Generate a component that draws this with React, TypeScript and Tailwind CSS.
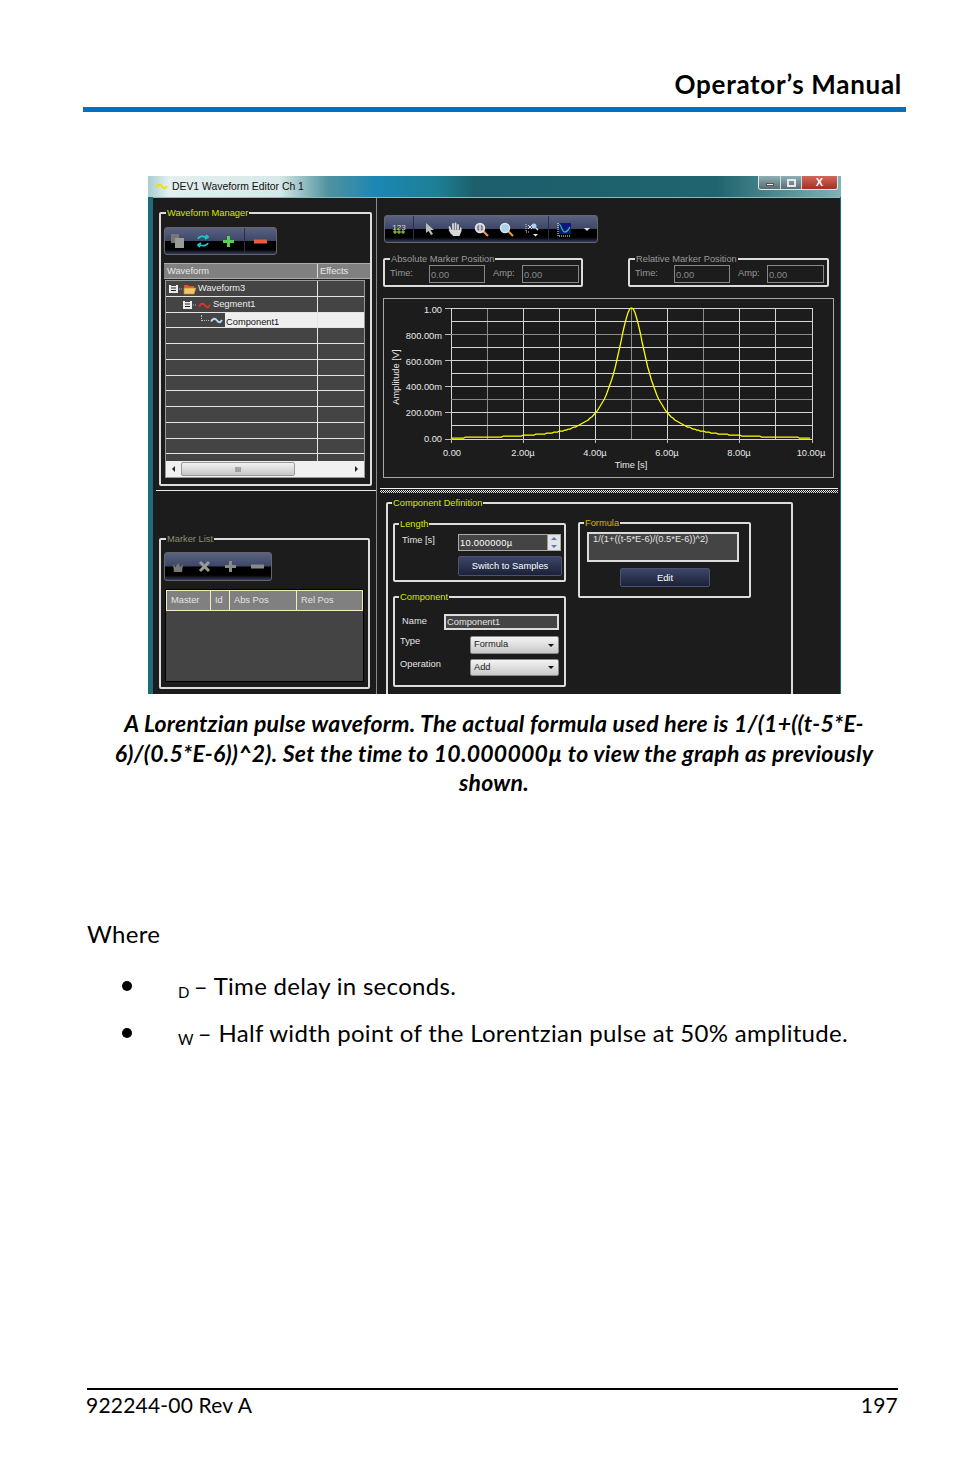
import React from 'react';

const Group = ({ title, color, className, legend = 'ml-[4px]', children }: { title: string; color: string; className: string; legend?: string; children: React.ReactNode }) => (
  <fieldset className={`border-2 border-[#dcdcdc] rounded-[2px] ${className}`}>
    <legend className={`px-[1px] text-[9.3px] leading-[12px] ${legend} ${color}`}>{title}</legend>
    {children}
  </fieldset>
);

const Slot = ({ w, children }: { w: string; children?: React.ReactNode }) => (
  <div className={`flex items-center justify-center h-full ${w}`}>{children}</div>
);

const BarDivider = () => <div className="w-px h-full bg-[#2a3048]" />;

const toolbarBg = 'bg-[linear-gradient(180deg,#5a6280_0%,#3d4768_48%,#000_52%,#000_82%,#333b5a_100%)] border border-[#666] rounded-[3px] flex items-center';

const Expander = () => (
  <svg width="13" height="9" viewBox="0 0 13 9" className="shrink-0">
    <path d="M0 0h2v1h5V0h2v8H0z" fill="#ececec" />
    <path d="M2 3h5M2 5.5h5" stroke="#222" strokeWidth="1.2" />
    <path d="M10 4h3" stroke="#bbb" strokeDasharray="1 1" />
  </svg>
);

const Wave = ({ color, w = 13 }: { color: string; w?: number }) => (
  <svg width={w} height="7" viewBox="0 0 13 7" className="shrink-0">
    <path d="M1 4.5C3 1 5 1 7 3.5S10 6 12 3" fill="none" stroke={color} strokeWidth="2" />
  </svg>
);

const Folder = () => (
  <svg width="14" height="12" viewBox="0 0 14 12" className="shrink-0">
    <path d="M1 2h4l1 1h5v2H1z" fill="#e0552a" />
    <path d="M1 11V5h12l-2 6z" fill="#f2c56b" stroke="#c98a2c" strokeWidth="0.7" />
  </svg>
);

const Lens = ({ red }: { red?: boolean }) => (
  <svg width="15" height="15" viewBox="0 0 15 15">
    <path d="M9 9l5 5" stroke="#e79a3a" strokeWidth="2.2" />
    <circle cx="6" cy="6" r="4.5" fill="#a9d3ee" stroke="#dfe8ee" strokeWidth="1.4" />
    {red && <path d="M5 4H4v4h1M7 4h1v4H7" fill="none" stroke="#d8261c" />}
  </svg>
);

const HandIcon = () => (
  <svg width="14" height="15" viewBox="0 0 14 15">
    <path d="M2.5 8L1.5 5M5 7V2M7.5 7V1.5M10 7V3" stroke="#d8d8d8" strokeWidth="1.8" strokeLinecap="round" />
    <path d="M3 7.5h9V5l1.5 1v3l-2 5H5L3 11z" fill="#d8d8d8" />
    <path d="M1.5 7.5L4 12" stroke="#d8d8d8" strokeWidth="2" />
  </svg>
);

const Plus = ({ color }: { color: string }) => (
  <svg width="13" height="13" viewBox="0 0 13 13"><path d="M6.5 1v11M1 6.5h11" stroke={color} strokeWidth="3" /></svg>
);

const Minus = ({ color }: { color: string }) => (
  <svg width="13" height="5" viewBox="0 0 13 5"><rect width="13" height="4" y="0.5" fill={color} /></svg>
);

const Chart = () => {
  const x0 = 67, x1 = 428, y0 = 9, y1 = 140;
  const sx = (t: number) => x0 + ((x1 - x0) * t) / 10;
  const sy = (v: number) => y1 - (y1 - y0) * v;
  const pts: string[] = [];
  for (let t = 0; t <= 10; t += 0.05) {
    const v = 1 / (1 + ((t - 5) / 0.5) ** 2);
    pts.push(`${sx(t).toFixed(1)},${Math.round(sy(v))}`);
  }
  const vGrey = [1, 5, 7];
  const hGrey = [2, 7];
  const yLabels = [['1.00', 10], ['800.00m', 36], ['600.00m', 62], ['400.00m', 87], ['200.00m', 113], ['0.00', 139]] as const;
  const xLabels = [['0.00', 68], ['2.00µ', 139], ['4.00µ', 211], ['6.00µ', 283], ['8.00µ', 355], ['10.00µ', 427]] as const;
  return (
    <svg width="449" height="178" viewBox="0 0 449 178" className="block">
      <g shapeRendering="crispEdges">
        {Array.from({ length: 11 }, (_, i) => (
          <line key={i} x1={sx(i)} x2={sx(i)} y1={y0} y2={y1} stroke={vGrey.includes(i) ? '#8a8a8a' : '#d4d4d4'} />
        ))}
        {Array.from({ length: 11 }, (_, i) => (
          <line key={i} y1={y0 + ((y1 - y0) * i) / 10} y2={y0 + ((y1 - y0) * i) / 10} x1={x0} x2={x1} stroke={hGrey.includes(i) ? '#8a8a8a' : '#d4d4d4'} />
        ))}
        {[0, 2, 4, 6, 8, 10].map(i => (
          <React.Fragment key={i}>
            <line x1={x0 - 6} x2={x0} y1={y0 + ((y1 - y0) * i) / 10} y2={y0 + ((y1 - y0) * i) / 10} stroke="#bbb" />
            <line x1={sx(i)} x2={sx(i)} y1={y1} y2={y1 + 4} stroke="#bbb" />
          </React.Fragment>
        ))}
      </g>
      <polyline points={pts.join(' ')} fill="none" stroke="#ffff00" strokeWidth="1.25" />
      <g fill="#e8e8e8" fontSize="9.3" fontFamily="'Liberation Sans', sans-serif">
        {yLabels.map(([l, y]) => <text key={l} x="58" y={y + 3.5} textAnchor="end">{l}</text>)}
        {xLabels.map(([l, x]) => <text key={l} x={x} y="157" textAnchor="middle">{l}</text>)}
        <text x="247" y="169" textAnchor="middle">Time [s]</text>
        <text transform="translate(15 78) rotate(-90)" textAnchor="middle">Amplitude [V]</text>
      </g>
    </svg>
  );
};

const treeRows = [0, 1, 2, 3, 4, 5, 6, 7, 8, 9, 10];

const WaveformManager = () => (
  <Group title="Waveform Manager" color="text-[#d6e600]" legend="ml-[2px]" className="w-[211px] pl-[3px] pb-[6px]">
    <div className={`${toolbarBg} mt-[8px] w-[113px] h-[28px]`}>
      <Slot w="w-[26px]">
        <svg width="14" height="14" viewBox="0 0 14 14"><rect x="0" y="0" width="8" height="9" fill="#777" /><rect x="4" y="4" width="9" height="10" fill="#9a9a9a" /></svg>
      </Slot>
      <Slot w="w-[26px]">
        <svg width="12" height="14" viewBox="0 0 12 14"><path d="M1 5c1-3 5-3 8-2M9 1l2 2-3 2M11 9c-1 3-5 3-8 2M3 13l-2-2 3-2" fill="none" stroke="#18c8c8" strokeWidth="1.8" /></svg>
      </Slot>
      <Slot w="w-[26px]"><Plus color="#56d050" /></Slot>
      <div className="w-[2px]" />
      <BarDivider />
      <Slot w="w-[32px]"><Minus color="#f0593a" /></Slot>
    </div>
    <div className="mt-[8px] w-[206px] h-[16px] bg-[#808080] border-y border-[#aaa] flex text-[9.3px] leading-[14px] text-[#e8e8e8]">
      <div className="w-[154px] pl-[3px] border-r border-[#ddd]">Waveform</div>
      <div className="pl-[2px]">Effects</div>
    </div>
    <div className="mt-[1px] ml-[1px] w-[200px] h-[198px] bg-[#444] border border-[#999] flex flex-col text-[9.3px] text-[#eee]">
      {treeRows.map(i => (
        <div key={i} className="h-[15.75px] shrink-0 flex border-b border-[#e4e4e4]">
          <div className="w-[152px] flex items-center border-r border-[#e4e4e4]">
            {i === 0 && (
              <div className="flex items-center gap-[1px] pl-[3px] pt-[2px]"><Expander /><Folder /><span>Waveform3</span></div>
            )}
            {i === 1 && (
              <div className="flex items-center gap-[2px] pl-[17px] pt-[2px]"><Expander /><Wave color="#e03030" /><span>Segment1</span></div>
            )}
            {i === 2 && (
              <>
                <div className="flex items-center gap-[1px] pl-[35px] w-[59px] pt-[2px]">
                  <div className="w-[8px] h-[6px] border-l border-b border-dotted border-[#bbb] -mt-[6px]" />
                  <Wave color="#bcd8f0" />
                </div>
                <div className="flex-1 self-stretch overflow-hidden bg-[#eeeeee] text-[#111] leading-[18px] pl-[1px]">Component1</div>
              </>
            )}
          </div>
          <div className={`flex-1 ${i === 2 ? 'bg-[#eeeeee]' : ''}`} />
        </div>
      ))}
      <div className="flex-1 flex min-h-0">
        <div className="w-[152px] border-r border-[#e4e4e4]" />
      </div>
      <div className="h-[16px] shrink-0 bg-[#f0f0f0] flex items-center">
        <div className="w-[15px] flex justify-center"><div className="border-y-[3px] border-r-[3px] border-y-transparent border-r-[#222]" /></div>
        <div className="w-[114px] h-[14px] bg-[linear-gradient(180deg,#f2f2f2,#c6c6c6)] border border-[#999] rounded-[2px] flex items-center justify-center text-[7px] leading-none text-[#333]">III</div>
        <div className="flex-1 flex justify-end pr-[6px]"><div className="border-y-[3px] border-l-[3px] border-y-transparent border-l-[#222]" /></div>
      </div>
    </div>
  </Group>
);

const MarkerList = () => (
  <Group title="Marker List" color="text-[#8f8f70]" legend="ml-[2px]" className="w-[211px] pl-[3px] pb-[5px]">
    <div className={`${toolbarBg} mt-[7px] w-[108px] h-[29px]`}>
      <Slot w="w-[26px]">
        <svg width="12" height="10" viewBox="0 0 12 10"><path d="M1 2l2.5 3L6 1l2.5 4L11 2l-1 8H2z" fill="#777" /></svg>
      </Slot>
      <Slot w="w-[26px]">
        <svg width="13" height="13" viewBox="0 0 13 13"><path d="M2 2l9 9M11 2l-9 9" stroke="#999" strokeWidth="3" /></svg>
      </Slot>
      <Slot w="w-[26px]"><Plus color="#8a8a8a" /></Slot>
      <Slot w="w-[28px]"><Minus color="#8a8a8a" /></Slot>
    </div>
    <div className="mt-[8px] ml-[1px] w-[199px] h-[93px] bg-[#444] border border-black flex flex-col">
      <div className="h-[21px] bg-[#808080] border border-[#f4edb8] flex text-[9.3px] leading-[19px] text-[#e4e4e4]">
        <div className="w-[44px] pl-[4px] border-r border-[#f4edb8]">Master</div>
        <div className="w-[19px] pl-[4px] border-r border-[#f4edb8]">Id</div>
        <div className="w-[67px] pl-[4px] border-r border-[#f4edb8]">Abs Pos</div>
        <div className="pl-[4px]">Rel Pos</div>
      </div>
    </div>
  </Group>
);

const MarkerPosition = ({ title, className }: { title: string; className: string }) => (
  <Group title={title} color="text-[#9a9a9a]" legend="ml-[5px]" className={className}>
    <div className="flex items-start pb-[2px] text-[9.3px] text-[#999]">
      <div className="w-[44px] pl-[5px] leading-[14px] pt-[1px]">Time:</div>
      <div className="w-[56px] h-[18px] border border-[#888] pl-[1px] leading-[18px] text-[#8a8a8a]">0.00</div>
      <div className="w-[37px] pl-[8px] leading-[14px] pt-[1px]">Amp:</div>
      <div className="w-[57px] h-[18px] border border-[#888] pl-[1px] leading-[18px] text-[#8a8a8a]">0.00</div>
    </div>
  </Group>
);

const EditorWindow = () => (
  <div className="ml-[148px] mt-[64px] w-[693px] h-[518px] overflow-hidden flex flex-col bg-[#1b6b78] font-['Liberation_Sans',sans-serif]">
    <div className="h-[21px] shrink-0 flex items-start bg-[linear-gradient(90deg,#a9cdd0_0%,#e4efef_3%,#d8e8e8_19%,#4f929e_26%,#1c87b4_33%,#1c7f94_42%,#1d5f6c_47%,#1f646e_82%,#7fb3b6_100%)]">
      <div className="flex items-center gap-[4px] pl-[7px] pt-[5px] flex-1 text-[10.4px] leading-[11px] text-[#111]">
        <Wave color="#f2e000" />
        <span>DEV1 Waveform Editor Ch 1</span>
      </div>
      <div className="flex h-[14px] mr-[3px] border border-t-0 border-[#dfe8e8] rounded-b-[3px] overflow-hidden">
        <div className="w-[22px] flex items-center justify-center bg-[linear-gradient(180deg,#8fb0b5,#566d75)] border-r border-[#cfdcdc]"><div className="w-[8px] h-[3px] mt-[4px] bg-[#f0f0f0] border border-[#555]" /></div>
        <div className="w-[21px] flex items-center justify-center bg-[linear-gradient(180deg,#8fb0b5,#566d75)] border-r border-[#cfdcdc]"><div className="w-[9px] h-[8px] border-2 border-[#e4e8e8]" /></div>
        <div className="w-[35px] flex items-center justify-center bg-[linear-gradient(180deg,#d0685c,#a52f22)] text-[11px] leading-none font-bold text-white">X</div>
      </div>
    </div>
    <div className="ml-[5px] mr-[1px] flex-1 min-h-0 flex bg-[#1c1c1c] border-t border-[#8fb8bc]">
      <div className="w-[224px] shrink-0 border-r border-[#8a8a8a]">
        <div className="h-[293px] pl-[3px] pt-[9px] border-b border-[#e8e8e8] ml-[3px]">
          <WaveformManager />
        </div>
        <div className="pl-[6px] pt-[42px]"><MarkerList /></div>
      </div>
      <div className="flex-1 min-w-0">
        <div className="pl-[7px] pt-[17px]">
          <div className={`${toolbarBg} w-[214px] h-[28px]`}>
            <Slot w="w-[28px]">
              <svg width="14" height="12" viewBox="0 0 14 12">
                <text x="7" y="6.5" textAnchor="middle" fontSize="8" fontFamily="'Liberation Sans', sans-serif" fill="#e4e66a">123</text>
                <path d="M1 9h12M3 7v4M7 7v4M11 7v4" stroke="#a8e03a" />
              </svg>
            </Slot>
            <BarDivider />
            <div className="w-[3px]" />
            <Slot w="w-[26px]">
              <svg width="10" height="14" viewBox="0 0 10 14"><path d="M1 1v10l2.5-2L6 13l2-1-2.5-4H9z" fill="#bbb" /></svg>
            </Slot>
            <Slot w="w-[26px]"><HandIcon /></Slot>
            <Slot w="w-[26px]"><Lens red /></Slot>
            <Slot w="w-[26px]"><Lens /></Slot>
            <Slot w="w-[26px]">
              <svg width="15" height="15" viewBox="0 0 15 15">
                <path d="M1 2v8h3" fill="none" stroke="#ddd" strokeDasharray="1 1" />
                <path d="M3 3l4 4M7 3l-4 4" stroke="#ddd" />
                <circle cx="9" cy="4" r="2.5" fill="#a9d3ee" />
                <path d="M11 6l2 2" stroke="#ddd" strokeWidth="1.5" />
                <path d="M8 12h5l-2.5 2.5z" fill="#eee" />
              </svg>
            </Slot>
            <div className="w-[3px]" />
            <BarDivider />
            <div className="w-[2px]" />
            <Slot w="w-[26px]">
              <svg width="15" height="15" viewBox="0 0 15 15">
                <rect x="2" y="1" width="12" height="11" fill="#10138c" />
                <path d="M2 2c2 0 3 8 6 8s4-4 5-5" fill="none" stroke="#28d060" strokeWidth="1.2" />
                <path d="M1 1v13h13" fill="none" stroke="#fff" strokeDasharray="1 1" />
              </svg>
            </Slot>
            <Slot w="w-[20px]"><div className="border-x-[3px] border-t-[3px] border-x-transparent border-t-[#ddd]" /></Slot>
          </div>
          <div className="mt-[10px] -ml-[1px] flex">
            <MarkerPosition title="Absolute Marker Position" className="w-[200px]" />
            <div className="w-[45px]" />
            <MarkerPosition title="Relative Marker Position" className="w-[201px]" />
          </div>
          <div className="mt-[11px] -ml-[1px] w-[451px] h-[180px] border border-[#a8a8a8]">
            <Chart />
          </div>
        </div>
        <div className="mt-[10px] ml-[3px] mr-[2px] border-t border-[#f0f0f0]">
          <div className="mt-[1px] h-[3px] bg-[repeating-conic-gradient(#e8e8e8_0_25%,#1c1c1c_0_50%)] bg-[length:2px_2px]" />
        </div>
        <div className="pl-[9px] pt-[4px]">
          <Group title="Component Definition" color="text-[#d6e600]" legend="-ml-[1px]" className="w-[407px] pl-[5px] pb-[30px] text-[9.3px] text-[#e4e4e4]">
            <div className="flex gap-[12px]">
              <div>
                <Group title="Length" color="text-[#d6e600]" className="mt-[9px] w-[173px] pb-[4px]">
                  <div className="mt-[4px] flex">
                    <div className="w-[63px] pl-[7px] leading-[12px]">Time [s]</div>
                    <div className="w-[103px] h-[17px] border border-[#aaa] bg-[#444] flex text-white">
                      <div className="flex-1 pl-[1px] leading-[16px] tracking-[0.3px]">10.000000µ</div>
                      <div className="w-[13px] flex flex-col items-center justify-around bg-[#e4e4e4] border-l border-[#999]">
                        <div className="border-x-[3px] border-b-[3px] border-x-transparent border-b-[#5a78c0]" />
                        <div className="border-x-[3px] border-t-[3px] border-x-transparent border-t-[#5a78c0]" />
                      </div>
                    </div>
                  </div>
                  <div className="mt-[5px] ml-[63px] w-[104px] h-[20px] rounded-[2px] border border-[#4a5270] bg-[linear-gradient(180deg,#3c4668,#1b2138)] text-center leading-[18px] text-white">Switch to Samples</div>
                </Group>
                <Group title="Component" color="text-[#d6e600]" className="mt-[9px] w-[173px] pb-[9px]">
                  <div className="mt-[11px] flex">
                    <div className="w-[49px] pl-[7px] leading-[14px]">Name</div>
                    <div className="w-[115px] h-[16px] border-2 border-[#dcdcdc] bg-[#444] leading-[12px] pl-[1px]">Component1</div>
                  </div>
                  <div className="mt-[6px] flex">
                    <div className="w-[75px] pl-[5px] leading-[10px]">Type</div>
                    <div className="w-[89px] h-[18px] rounded-[2px] border border-[#888] bg-[linear-gradient(180deg,#f4f4f4,#c8c8c8)] flex items-center justify-between pl-[3px] pr-[4px] text-[#222]">
                      <span>Formula</span><div className="border-x-[3px] border-t-[3px] border-x-transparent border-t-[#111]" />
                    </div>
                  </div>
                  <div className="mt-[5px] flex">
                    <div className="w-[75px] pl-[5px] leading-[10px]">Operation</div>
                    <div className="w-[89px] h-[17px] rounded-[2px] border border-[#888] bg-[linear-gradient(180deg,#f4f4f4,#c8c8c8)] flex items-center justify-between pl-[3px] pr-[4px] text-[#222]">
                      <span>Add</span><div className="border-x-[3px] border-t-[3px] border-x-transparent border-t-[#111]" />
                    </div>
                  </div>
                </Group>
              </div>
              <div>
                <Group title="Formula" color="text-[#d6b800]" className="mt-[8px] w-[173px] pb-[9px]">
                  <div className="mt-[3px] ml-[7px] w-[152px] h-[30px] border-2 border-[#dcdcdc] bg-[#444] pl-[4px] leading-[11px]">1/(1+((t-5*E-6)/(0.5*E-6))^2)</div>
                  <div className="mt-[6px] ml-[40px] w-[90px] h-[19px] rounded-[2px] border border-[#4a5270] bg-[linear-gradient(180deg,#3c4668,#1b2138)] text-center leading-[18px] text-white">Edit</div>
                </Group>
              </div>
            </div>
          </Group>
        </div>
      </div>
    </div>
  </div>
);

const App = () => {
  return (
    <div className="w-[954px] h-[1475px] bg-white text-black flex flex-col font-['Lato',sans-serif]">
      <header className="ml-[83px] w-[823px] h-[112px] flex flex-col justify-end">
        <div className="text-right pr-[4px] text-[26px] leading-[30px] tracking-[0.7px] font-bold mb-[8px]">Operator’s Manual</div>
        <div className="h-[5px] bg-[#0070c0]" />
      </header>

      <EditorWindow />

      <p className="mt-[15px] pl-[34px] text-center text-[23px] leading-[29.5px] tracking-[0.25px] font-bold italic">
        A Lorentzian pulse waveform. The actual formula used here is 1/(1+((t-5*E-<br />
        6)/(0.5*E-6))^2). Set the time to 10.000000µ to view the graph as previously<br />
        shown.
      </p>

      <div className="mt-[121px] ml-[87px] text-[24px] leading-[30px] tracking-[0.3px]">Where</div>

      <ul className="mt-[22px] ml-[122px] flex flex-col gap-[17px] text-[24px] leading-[30px] tracking-[0.3px]">
        <li className="flex items-center">
          <div className="w-[56px]"><div className="w-[10px] h-[10px] rounded-full bg-black" /></div>
          <div><sub className="text-[15px] mr-[4px]">D</sub>– Time delay in seconds.</div>
        </li>
        <li className="flex items-center">
          <div className="w-[56px]"><div className="w-[10px] h-[10px] rounded-full bg-black" /></div>
          <div><sub className="text-[15px] mr-[4px]">W</sub>– Half width point of the Lorentzian pulse at 50% amplitude.</div>
        </li>
      </ul>

      <footer className="mt-auto mb-[55px] ml-[87px] w-[811px] border-t-2 border-black flex justify-between text-[21px] leading-[30px] tracking-[0.2px]">
        <span className="-ml-[1px]">922244-00 Rev A</span>
        <span>197</span>
      </footer>
    </div>
  );
};

export default App;
